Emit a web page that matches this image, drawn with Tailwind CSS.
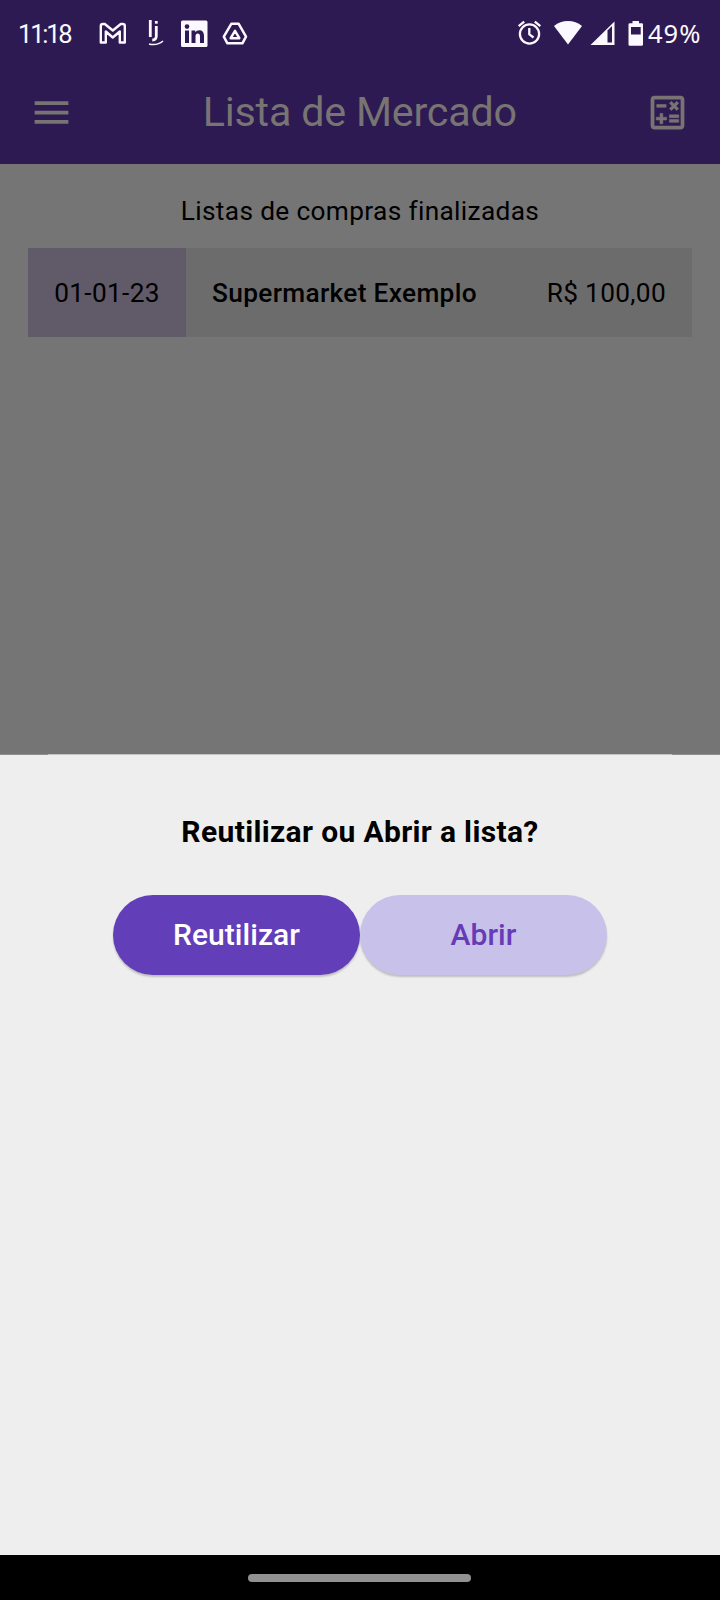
<!DOCTYPE html>
<html lang="pt-BR">
<head>
<meta charset="utf-8">
<title>Lista de Mercado</title>
<script src="https://cdn.jsdelivr.net/npm/@tailwindcss/browser@4"></script>
</head>
<body class="w-[720px] h-[1600px] flex flex-col overflow-hidden bg-[#757575] font-['Roboto',sans-serif] text-black whitespace-nowrap">
<header class="h-[164px] shrink-0 bg-[#2e1a52] flex flex-col">
  <div class="h-[60px] shrink-0 flex items-start pt-[18px] pl-[18px] pr-[19px] text-[#fbf8ff]">
    <span class="w-[81px] h-[32px] leading-[32px] text-[25.5px] tracking-[-2.2px]">11:18</span>
    <svg class="w-[27px] h-8" viewBox="0 0 27 32" fill="none" stroke="currentColor" stroke-width="2.400" stroke-linejoin="round"><path d="M1.800 8q0-2 2-2h2l8 6.500L21.800 6h2q2 0 2 2v16.500h-5V13.500l-7 6-7-6v11h-5z"/></svg>
    <svg class="w-[16px] h-8 ml-[22px]" viewBox="0 0 16 32" fill="none" stroke="currentColor"><path stroke-width="2.800" d="M2.300 2v17M8.300 8v10q0 4-4 4"/><path stroke-width="2.800" d="M8.300 3v2.700"/><path stroke-width="1.600" d="M1 26q8 2 14-3"/></svg>
    <svg class="w-[27px] h-8 ml-[17px]" viewBox="0 0 27 32"><rect y="2.500" width="26.500" height="26.500" rx="1.500" fill="currentColor"/><g fill="#2e1a52"><circle cx="6" cy="8.600" r="2.300"/><path d="M4 12.500h4V25H4zM10.500 12.500h3.800v1.700q1.300-2 4-2 4.700 0 4.700 5.600V25h-4v-6.500q0-3-2.200-3-2.300 0-2.300 3V25h-4z"/></g></svg>
    <svg class="w-[26px] h-8 ml-[14px]" viewBox="0 0 26 32" fill="none" stroke="currentColor" stroke-width="2.500" stroke-linejoin="round"><path d="M9.300 5.800h7.400l7.300 12.900-3.600 6.600H5.400l-3.600-6.600z"/><path d="M13 12.800l4.300 7.400H8.700z"/></svg>
    <span class="grow"></span>
    <svg class="w-[25px] h-8" viewBox="0 0 25 32" fill="none" stroke="currentColor" stroke-width="2.300"><circle cx="12.500" cy="16" r="9.600"/><path d="M12.300 10v6.300l4.200 3.200"/><path d="M1.700 8.200l5.500-4.600M23.300 8.200l-5.500-4.600"/></svg>
    <svg class="w-[28px] h-8 ml-[12px]" viewBox="0 0 28 32" fill="currentColor"><path d="M0 8Q6 3 14 3t14 5L14 26.500z"/></svg>
    <svg class="w-[25px] h-8 ml-[8px]" viewBox="0 0 25 32"><path fill="currentColor" d="M.5 27L24.500 3.500V27z"/><path fill="#2e1a52" d="M17.500 12.500l4.500-4.500V24.500h-4.500z"/></svg>
    <svg class="w-[16px] h-8 ml-[13px]" viewBox="0 0 16 32"><path fill="currentColor" d="M4.500 3h6.500v2.200h2.700q1.300 0 1.300 1.300v20q0 1.200-1.300 1.200H1.800Q.5 27.700.5 26.500v-20q0-1.300 1.300-1.300h2.700z"/><path fill="#2e1a52" d="M3 9h9.700v7.500H3z"/></svg>
    <span class="w-[57px] h-[32px] -mt-px pl-[4px] leading-[32px] font-['Noto_Sans',sans-serif] text-[25.5px] tracking-[1px]">49%</span>
  </div>
  <div class="grow flex items-center justify-between pl-[29px] pr-[29.500px] text-[#777473]">
    <svg class="size-[45px]" viewBox="0 0 24 24" fill="currentColor"><path d="M3 18h18v-2H3v2zm0-5h18v-2H3v2zm0-7v2h18V6H3z"/></svg>
    <h1 class="text-[41.25px] leading-[48px] tracking-[-0.2px]">Lista de Mercado</h1>
    <svg class="size-[45px]" viewBox="0 0 24 24" fill="currentColor"><path d="M19 3H5c-1.100 0-2 .9-2 2v14c0 1.100.9 2 2 2h14c1.100 0 2-.9 2-2V5c0-1.100-.9-2-2-2zm0 16H5V5h14v14z"/><path d="M6.250 7.720h5v1.500h-5zM13 15.750h5v1.500h-5zM13 13.250h5v1.500h-5zM8 18h1.500v-2h2v-1.500h-2v-2H8v2H6V16h2zM14.090 10.950l1.410-1.410 1.410 1.410 1.060-1.060-1.410-1.420 1.410-1.410L16.910 6 15.500 7.410 14.090 6l-1.060 1.060 1.410 1.410-1.410 1.420z" stroke="currentColor" stroke-width=".3"/></svg>
  </div>
</header>
<main class="h-[590px] shrink-0 flex flex-col px-7 pt-[29px]">
  <h2 class="h-[36px] leading-[36px] text-center text-[26.25px] tracking-[0.35px]">Listas de compras finalizadas</h2>
  <div class="mt-[19px] h-[89px] flex items-center bg-[#6c6c6c] text-[26.25px] tracking-[0.33px]">
    <div class="w-[158px] h-full pt-0.5 bg-[#615a69] flex items-center justify-center">01-01-23</div>
    <div class="grow pt-0.5 pl-[26px] font-medium">Supermarket Exemplo</div>
    <div class="pt-0.5 pr-[26px]">R$ 100,00</div>
  </div>
</main>
<section class="h-[801px] shrink-0 bg-[#eeeeee] flex flex-col items-center">
  <div class="w-full h-px shrink-0 bg-[#8f8f8f] px-12"><div class="h-px bg-[#c4c4c4]"></div></div>
  <p class="mt-[59px] h-9 leading-9 text-[30px] font-bold tracking-[0.35px]">Reutilizar ou Abrir a lista?</p>
  <div class="mt-[44.500px] flex text-[30px] font-medium tracking-[0.05px]">
    <button class="w-[247px] h-20 rounded-full bg-[#623eb9] text-white shadow-[0_2px_2px_rgba(0,0,0,0.2)]">Reutilizar</button>
    <button class="w-[247px] h-20 rounded-full bg-[#c8c1ea] text-[#673ab7] shadow-[0_2px_2px_rgba(0,0,0,0.2)]">Abrir</button>
  </div>
</section>
<footer class="grow bg-black flex pl-[248px] pt-[19px]"><div class="w-[223px] h-2 rounded-full bg-[#919191]"></div></footer>
</body>
</html>
